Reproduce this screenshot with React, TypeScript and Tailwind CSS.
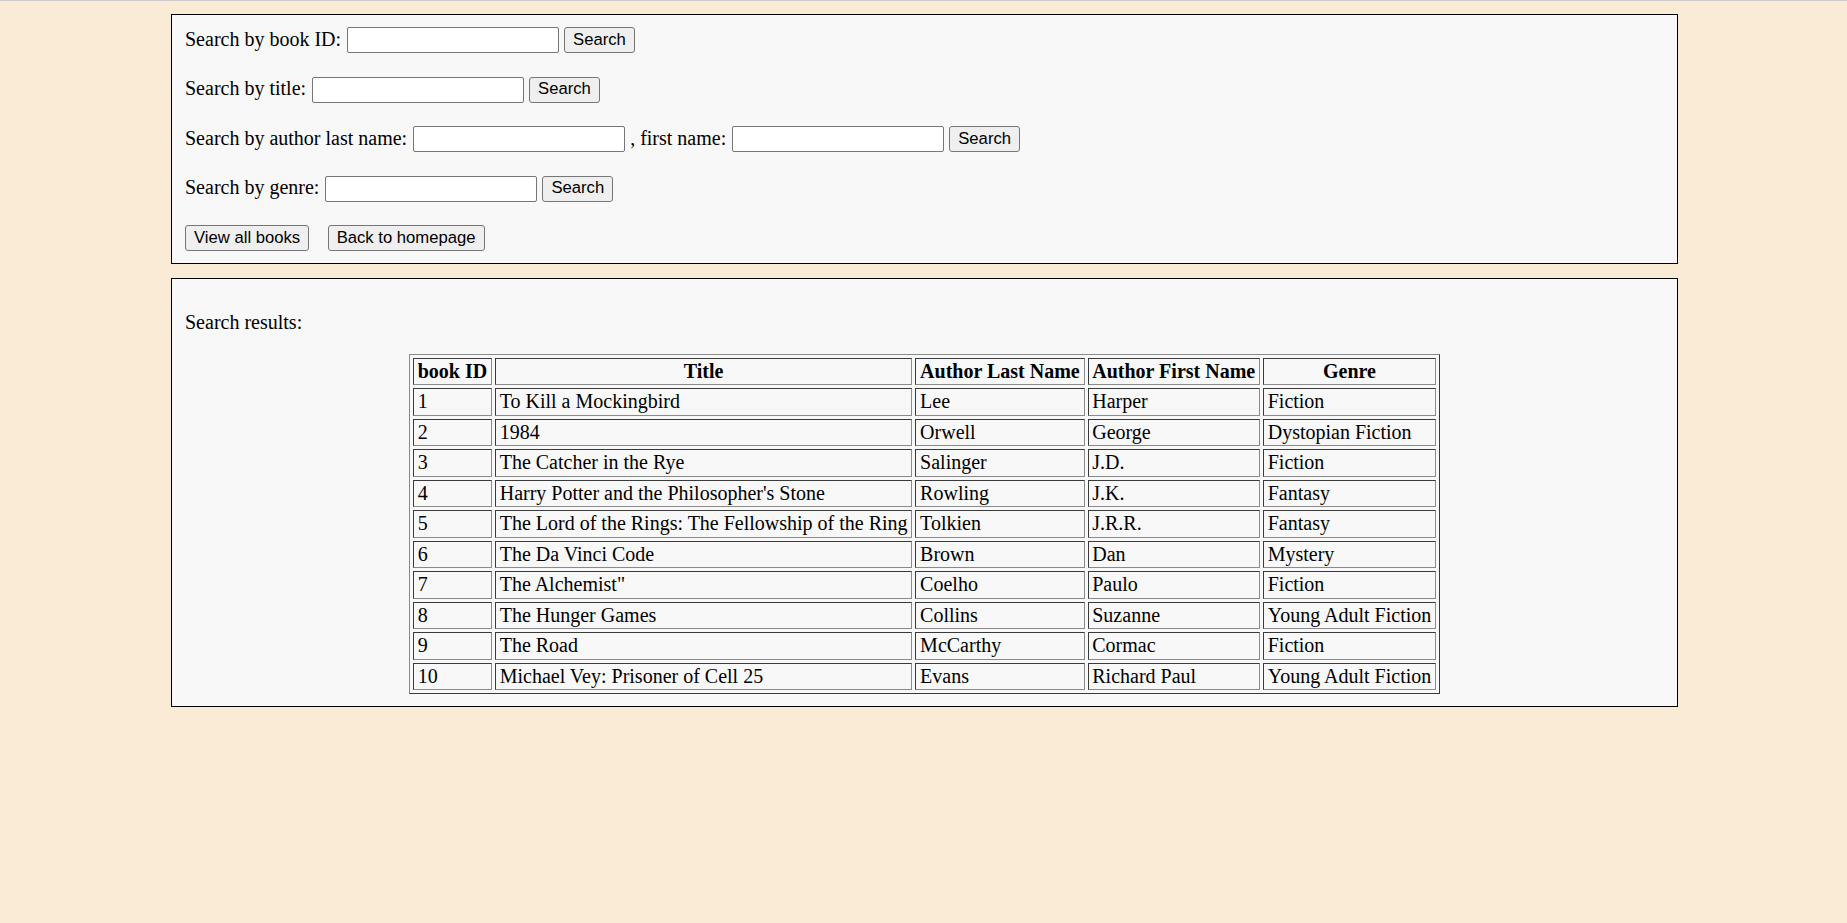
import React from "react";

// Book rows shown in the search results table
interface Book {
  id: number;
  title: string;
  last: string;
  first: string;
  genre: string;
}

const books: Book[] = [
  { id: 1, title: "To Kill a Mockingbird", last: "Lee", first: "Harper", genre: "Fiction" },
  { id: 2, title: "1984", last: "Orwell", first: "George", genre: "Dystopian Fiction" },
  { id: 3, title: "The Catcher in the Rye", last: "Salinger", first: "J.D.", genre: "Fiction" },
  { id: 4, title: "Harry Potter and the Philosopher's Stone", last: "Rowling", first: "J.K.", genre: "Fantasy" },
  { id: 5, title: "The Lord of the Rings: The Fellowship of the Ring", last: "Tolkien", first: "J.R.R.", genre: "Fantasy" },
  { id: 6, title: "The Da Vinci Code", last: "Brown", first: "Dan", genre: "Mystery" },
  { id: 7, title: 'The Alchemist"', last: "Coelho", first: "Paulo", genre: "Fiction" },
  { id: 8, title: "The Hunger Games", last: "Collins", first: "Suzanne", genre: "Young Adult Fiction" },
  { id: 9, title: "The Road", last: "McCarthy", first: "Cormac", genre: "Fiction" },
  { id: 10, title: "Michael Vey: Prisoner of Cell 25", last: "Evans", first: "Richard Paul", genre: "Young Adult Fiction" },
];

function TextInput() {
  return (
    <input
      type="text"
      className="h-[26px] w-[212px] rounded-[2px] border border-[#767676] bg-white px-[2px] outline-none"
    />
  );
}

function Button({ children }: { children: React.ReactNode }) {
  return (
    <button
      type="button"
      className="h-[26px] rounded-[3px] border border-[#767676] bg-[#efefef] px-[8px] font-['Liberation_Sans',Arial,sans-serif] text-[16.67px] leading-none text-black"
    >
      {children}
    </button>
  );
}

function Label({ children }: { children: React.ReactNode }) {
  return <span className="pb-[3px]">{children}</span>;
}

// cell borders mimic the classic inset / outset table look
const cell =
  "border border-t-[#3a3a3a] border-l-[#3a3a3a] border-b-[#8a8a8a] border-r-[#8a8a8a] px-[3.75px] py-[1.25px] leading-[23px] h-[27.5px]";

export default function App() {
  return (
    <div className="min-h-screen border-t border-[#cccccc] bg-[#faebd7] font-['Liberation_Serif','Times_New_Roman',serif] text-[20px] text-black">
      {/* search form */}
      <div className="ml-[171px] mt-[13px] w-[1507px] border border-black bg-[#f8f8f8] px-[13px] pb-[11.5px] pt-[12px]">
        <div className="flex flex-col gap-[23.5px]">
          <div className="flex h-[26px] items-center gap-[5.5px]">
            <Label>Search by book ID:</Label>
            <TextInput />
            <Button>Search</Button>
          </div>
          <div className="flex h-[26px] items-center gap-[5.5px]">
            <Label>Search by title:</Label>
            <TextInput />
            <Button>Search</Button>
          </div>
          <div className="flex h-[26px] items-center gap-[5.5px]">
            <Label>Search by author last name:</Label>
            <TextInput />
            <Label>, first name:</Label>
            <TextInput />
            <Button>Search</Button>
          </div>
          <div className="flex h-[26px] items-center gap-[5.5px]">
            <Label>Search by genre:</Label>
            <TextInput />
            <Button>Search</Button>
          </div>
          <div className="flex h-[26px] items-center gap-[18.5px]">
            <Button>View all books</Button>
            <Button>Back to homepage</Button>
          </div>
        </div>
      </div>

      {/* results */}
      <div className="ml-[171px] mt-[14px] w-[1507px] border border-black bg-[#f8f8f8] px-[13px] py-[12px]">
        <p className="my-[20px] leading-[23px]">Search results:</p>
        <table className="mx-auto border-separate border-spacing-[3px] border border-t-[#8a8a8a] border-l-[#8a8a8a] border-b-[#3a3a3a] border-r-[#3a3a3a]">
          <thead>
            <tr>
              <th className={`${cell} font-bold text-center`}>book ID</th>
              <th className={`${cell} font-bold text-center`}>Title</th>
              <th className={`${cell} font-bold text-center`}>Author Last Name</th>
              <th className={`${cell} font-bold text-center`}>Author First Name</th>
              <th className={`${cell} font-bold text-center`}>Genre</th>
            </tr>
          </thead>
          <tbody>
            {books.map((b) => (
              <tr key={b.id}>
                <td className={`${cell} text-left`}>{b.id}</td>
                <td className={`${cell} text-left`}>{b.title}</td>
                <td className={`${cell} text-left`}>{b.last}</td>
                <td className={`${cell} text-left`}>{b.first}</td>
                <td className={`${cell} text-left`}>{b.genre}</td>
              </tr>
            ))}
          </tbody>
        </table>
      </div>
    </div>
  );
}
